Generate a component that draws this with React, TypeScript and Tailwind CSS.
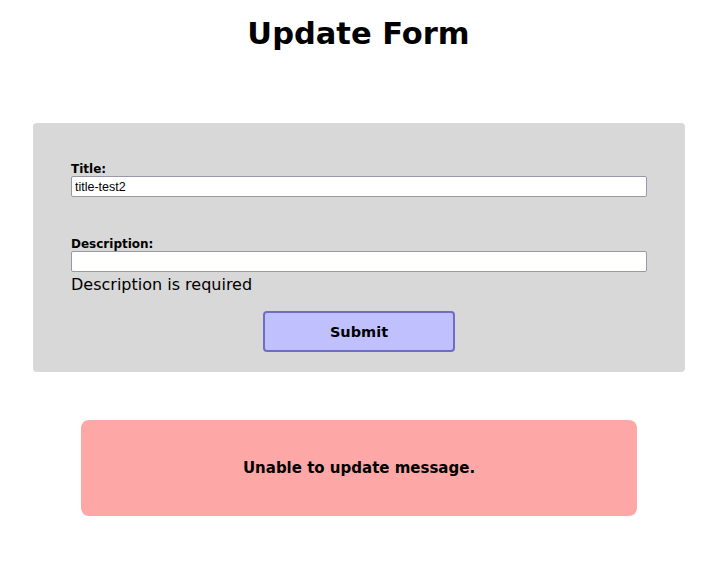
export default function App() {
  return (
    <div className="min-h-[574px] bg-white pt-[14px] text-black" style={{ fontFamily: '"DejaVu Sans", sans-serif' }}>
      <h1 className="text-center text-[30.5px] font-bold leading-[40px]">Update Form</h1>

      <form
        className="ml-[33px] mr-[32px] mt-[69px] rounded-[4px] bg-[#d8d8d8] px-[38px] pb-[20px] pt-[39px]"
        onSubmit={(e) => e.preventDefault()}
      >
        <label className="block text-[12px] font-bold leading-[14px]">Title:</label>
        <input
          defaultValue="title-test2"
          className="block h-[21px] w-full rounded-[2px] border border-[#9a98a8] bg-white px-[3px] text-[12.5px] leading-[19px]"
          style={{ fontFamily: '"Liberation Sans", sans-serif' }}
        />

        <label className="mt-[40px] block text-[12px] font-bold leading-[14px]">Description:</label>
        <input className="block h-[21px] w-full rounded-[2px] border border-[#9a98a8] bg-white px-[3px] text-[13px]" />
        <p className="pt-[3px] text-[16px] leading-[20px]">Description is required</p>

        <div className="mt-[16px] flex justify-center">
          <button
            type="submit"
            className="h-[41px] w-[192px] rounded-[4px] border-2 border-[#6e6ec8] bg-[#c0c0fe] pt-[3px] text-[14.5px] font-bold"
          >
            Submit
          </button>
        </div>
      </form>

      <div className="ml-[81px] mr-[80px] mt-[48px] flex h-[96px] items-center justify-center rounded-[8px] bg-[#fea7a7]">
        <p className="text-[15px] font-bold">Unable to update message.</p>
      </div>
    </div>
  );
}
